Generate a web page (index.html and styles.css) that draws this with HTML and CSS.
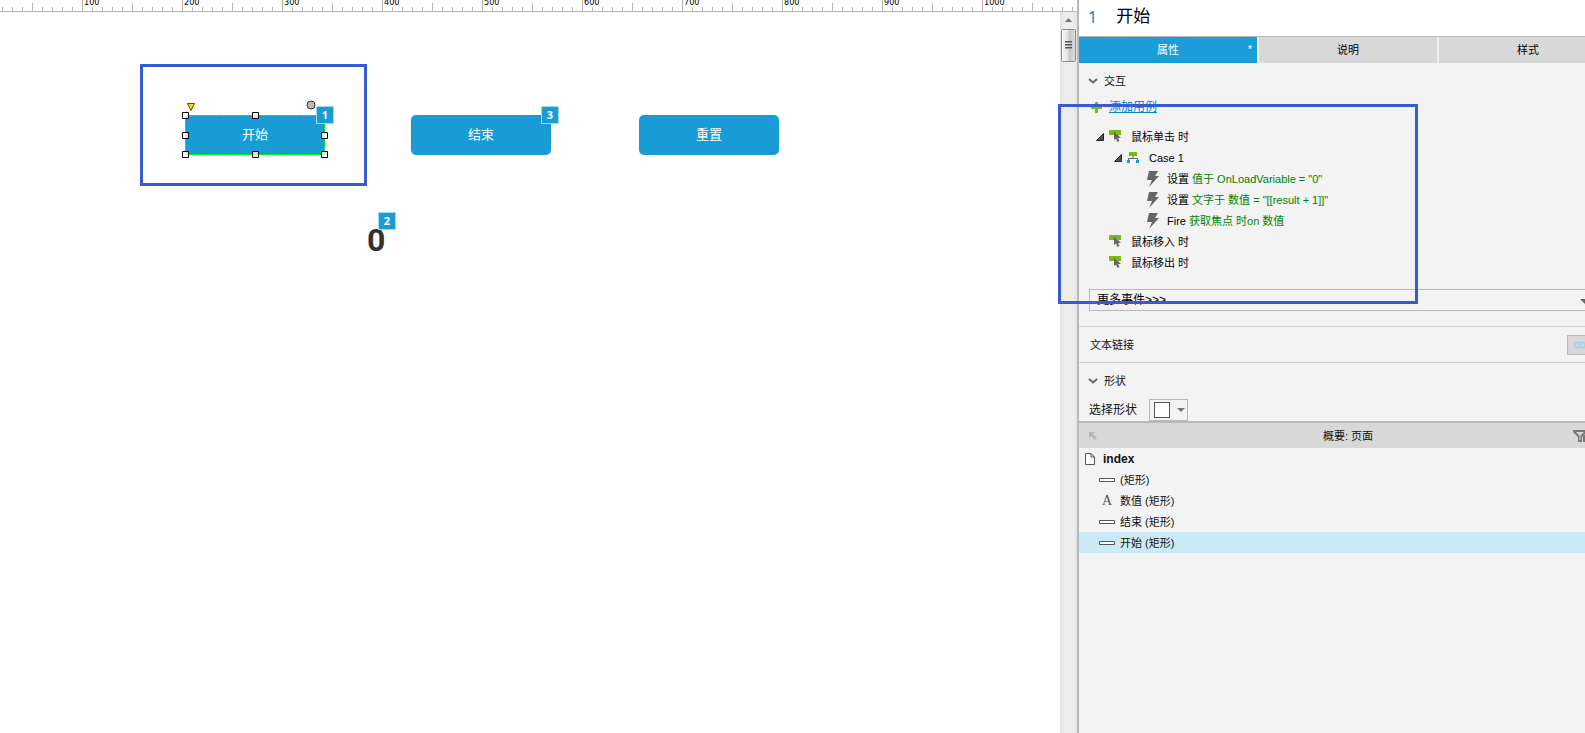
FILE: index.html
```html
<!DOCTYPE html>
<html lang="zh-CN">
<head>
<meta charset="utf-8">
<title>index</title>
<link rel="stylesheet" href="styles.css">
</head>
<body>
<svg class="defs" width="0" height="0" aria-hidden="true">
  <symbol id="open" viewBox="0 0 8 8"><path d="M7.500 .5V7.500H.5Z" fill="#555" stroke="#222"/></symbol>
  <symbol id="mouse" viewBox="0 0 12 14"><path d="M0 0H12V5H9L5 1V5H0Z" fill="#76bc0c"/><path d="M5 1V10L7 8.500L8.500 12L10.500 11L9 8H12Z" fill="#666"/></symbol>
  <symbol id="case" viewBox="0 0 12 12"><path d="M2 0H10V4H2Z" fill="#76bc0c"/><path d="M6 4V6M1.500 8V6.500H10.500V8" fill="none" stroke="#666"/><path d="M0 8H3V11H0ZM9 8H12V11H9Z" fill="#1a9cd8"/></symbol>
  <symbol id="bolt" viewBox="0 0 12 16"><path d="M2 0H11L8 5H12L2 16L5 9H0Z" fill="#666"/></symbol>
  <symbol id="chevron" viewBox="0 0 10 6"><path d="M1 1L5 4.500L9 1" fill="none" stroke="#666673" stroke-width="2"/></symbol>
  <symbol id="bar" viewBox="0 0 16 4"><path d="M.5 .5H15.500V3.500H.5Z" fill="#fff" stroke="#555"/></symbol>
</svg>
<main class="canvas">
  <div class="ruler"><span>100</span><span>200</span><span>300</span><span>400</span><span>500</span><span>600</span><span>700</span><span>800</span><span>900</span><span>1000</span></div>
  <div class="stage">
    <div class="page">
      <div class="frame frame-start"></div>
      <button class="shape shape-start">开始</button>
      <svg class="selection" width="155" height="60" viewBox="0 0 155 60" aria-hidden="true">
        <path d="M4.500 16.500H143.500V55.500H4.500Z" fill="none" stroke="#0f0" stroke-dasharray="4 1"/>
        <path d="M6.500 4.500H13.500L10 11.500Z" fill="#ffd400" stroke="#5b4a10"/>
        <circle cx="130" cy="6" r="4" fill="#bbb" stroke="#333"/>
        <g fill="#fff" fill-opacity=".8" stroke="#000"><path d="M1.500 13.500h6v6h-6zM71.500 13.500h6v6h-6zM1.500 33.500h6v6h-6zM140.500 33.500h6v6h-6zM1.500 52.500h6v6h-6zM71.500 52.500h6v6h-6zM140.500 52.500h6v6h-6z"/></g>
      </svg>
      <span class="badge badge-1">1</span>
      <button class="shape shape-end">结束</button><span class="badge badge-3">3</span>
      <button class="shape shape-reset">重置</button>
      <span class="value">0</span><span class="badge badge-2">2</span>
    </div>
    <div class="scroll">
      <svg width="17" height="51" viewBox="0 0 17 51" aria-hidden="true">
        <defs><linearGradient id="thumb"><stop offset="0" stop-color="#fafafa"/><stop offset=".45" stop-color="#e2e2e2"/><stop offset=".55" stop-color="#c5c6c8"/><stop offset="1" stop-color="#dedede"/></linearGradient></defs>
        <path d="M5 10L8.500 6L12 10Z" fill="#777"/>
        <rect x="1.500" y="17.500" width="14" height="32" rx="1" fill="url(#thumb)" stroke="#8c8c8c"/>
        <path d="M5 29.500H12M5 32.500H12M5 35.500H12" stroke="#555"/>
        <path d="M5 30.500H12M5 33.500H12M5 36.500H12" stroke="#999"/>
      </svg>
    </div>
  </div>
</main>
<aside class="panel">
  <div class="panel-inner">
    <header class="title"><span class="number">1</span><span>开始</span></header>
    <nav class="tabs"><button class="tab active">属性<span class="star">*</span></button><button class="tab">说明</button><button class="tab">样式</button></nav>
    <section class="events">
      <h2 class="heading"><svg width="10" height="6"><use href="#chevron"/></svg>交互</h2>
      <div class="add"><svg width="11" height="11" viewBox="0 0 11 11"><path d="M4 0H7V4H11V7H7V11H4V7H0V4H4Z" fill="#76bc21"/></svg><a href="#">添加用例</a></div>
      <ul class="tree">
        <li class="event"><svg width="8" height="8"><use href="#open"/></svg><svg width="12" height="14"><use href="#mouse"/></svg><span>鼠标单击 时</span></li>
        <li class="event case"><svg width="8" height="8"><use href="#open"/></svg><svg width="12" height="12"><use href="#case"/></svg><span>Case 1</span></li>
        <li class="event action"><svg width="12" height="16"><use href="#bolt"/></svg><span>设置 <em>值于 OnLoadVariable = "0"</em></span></li>
        <li class="event action"><svg width="12" height="16"><use href="#bolt"/></svg><span>设置 <em>文字于 数值 = "[[result + 1]]"</em></span></li>
        <li class="event action"><svg width="12" height="16"><use href="#bolt"/></svg><span>Fire <em>获取焦点 时on 数值</em></span></li>
        <li class="event closed"><svg width="12" height="14"><use href="#mouse"/></svg><span>鼠标移入 时</span></li>
        <li class="event closed"><svg width="12" height="14"><use href="#mouse"/></svg><span>鼠标移出 时</span></li>
      </ul>
      <div class="more"><select aria-label="更多事件"><option>更多事件&gt;&gt;&gt;</option></select><svg width="10" height="5" viewBox="0 0 10 5"><path d="M0 0H10L5 5Z" fill="#666"/></svg></div>
    </section>
    <section class="link-row"><span>文本链接</span><button class="link-button" aria-label="文本链接"><svg width="22" height="8" viewBox="0 0 22 8"><path d="M3 1.500H6Q8 4 6 6.500H3Q0 4 3 1.500ZM8 1.500H11Q13 4 11 6.500H8Q5 4 8 1.500ZM14 1.500H18Q20 4 18 6.500H14Q12 4 14 1.500Z" fill="none" stroke="#a9d3e3" stroke-width="2"/></svg></button></section>
    <section class="shape-section">
      <h2 class="heading"><svg width="10" height="6"><use href="#chevron"/></svg>形状</h2>
      <div class="picker"><span id="pick">选择形状</span><button class="picker-button" aria-labelledby="pick"><span class="swatch"></span><svg width="8" height="4" viewBox="0 0 8 4"><path d="M0 0H8L4 4Z" fill="#777"/></svg></button></div>
    </section>
    <header class="outline-title">
      <svg width="8" height="8" viewBox="0 0 8 8"><path d="M0 0H6L4 2L8 6L6 8L2 4L0 6Z" fill="#b5b5b5"/></svg>
      <span>概要: 页面</span>
      <svg width="34" height="12" viewBox="0 0 34 12"><path d="M0 0H14V2L9 7V12H5V7L0 2ZM3 2L6.500 5.500V10H7.500V5.500L11 2Z" fill="#777" fill-rule="evenodd"/><path d="M10 12V6L13 4V12Z" fill="#777"/></svg>
    </header>
    <ul class="outline">
      <li class="root"><svg width="10" height="12" viewBox="0 0 10 12"><path d="M.5 .5H6L9.500 4V11.500H.5ZM6 .5V4H9.500" fill="#fff" stroke="#555"/></svg><b>index</b></li>
      <li><svg width="16" height="4"><use href="#bar"/></svg>(矩形)</li>
      <li><span class="letter">A</span>数值 (矩形)</li>
      <li><svg width="16" height="4"><use href="#bar"/></svg>结束 (矩形)</li>
      <li class="selected"><svg width="16" height="4"><use href="#bar"/></svg>开始 (矩形)</li>
    </ul>
  </div>
  <div class="frame frame-events"></div>
</aside>
</body>
</html>
```

FILE: styles.css
```css
* { box-sizing: border-box; }
body {
  margin: 0;
  height: 100vh;
  display: flex;
  overflow: hidden;
  background: #fff;
  color: #111;
  font: 11px/20px "Liberation Sans", "Noto Sans CJK SC", sans-serif;
}
button, select { font: inherit; color: inherit; padding: 0; margin: 0; }
ul { list-style: none; margin: 0; padding: 0; }
svg { flex: none; display: block; }
.defs { position: absolute; }

.canvas { flex: 1; min-width: 0; display: flex; flex-direction: column; }
.ruler {
  display: flex;
  height: 12px;
  padding-left: 82px;
  overflow: hidden;
  border-bottom: 1px solid #b4b4b4;
  background:
    linear-gradient(90deg, #b4b4b4 1px, transparent 1px) 32px 3px / 50px 8px repeat-x,
    linear-gradient(90deg, #b4b4b4 1px, transparent 1px) 2px 7px / 10px 4px repeat-x;
}
.ruler span {
  flex: 0 0 100px;
  height: 12px;
  border-left: 1px solid #b4b4b4;
  padding-left: 1px;
  color: #000;
  font: 9px/5px "DejaVu Sans Condensed", "DejaVu Sans", sans-serif;
}
.stage { flex: 1; display: flex; }
.page { flex: 1; position: relative; }
.scroll { width: 17px; background: linear-gradient(90deg, #e4e4e4, #ededed 4px, #ededed 13px, #e4e4e4); }

.frame { position: absolute; border: 3px solid #385ad2; pointer-events: none; }
.frame-start { left: 140px; top: 52px; width: 227px; height: 122px; }
.frame-events { left: -21px; top: 104px; width: 360px; height: 200px; }
.shape {
  position: absolute;
  top: 103px;
  width: 140px;
  height: 40px;
  border: 0;
  border-radius: 5px;
  background: #199bd6;
  color: #fff;
  font-size: 13px;
}
.shape-start { left: 185px; border-radius: 0; }
.shape-end { left: 411px; }
.shape-reset { left: 639px; }
.selection { position: absolute; left: 181px; top: 87px; }
.badge {
  position: absolute;
  width: 18px;
  height: 18px;
  border: 1px solid #a5dcf2;
  background: #199bd6;
  color: #fff;
  font: bold 11px/16px "Noto Sans", sans-serif;
  text-align: center;
}
.badge-1 { left: 316px; top: 94px; }
.badge-2 { left: 378px; top: 200px; }
.badge-3 { left: 541px; top: 94px; }
.value { position: absolute; left: 367px; top: 212px; color: #333; font: 700 32px/32px Roboto, sans-serif; }

.panel { position: relative; flex: none; width: 508px; border-left: 2px solid #b8b8b8; background: #f3f3f3; }
.panel-inner { height: 100%; overflow: hidden; }
.panel-inner > * { width: calc(100% + 32px); }
.title { display: flex; align-items: center; gap: 19px; height: 37px; padding: 0 0 2px 9px; background: #fff; border-bottom: 1px solid #b8b8b8; color: #000; font-size: 17px; }
.number { color: #0a86b8; font: 16px/20px "Noto Sans", sans-serif; }
.tabs { display: grid; grid-template-columns: repeat(3, 1fr); gap: 2px; height: 26px; background: #eee; }
.tab { position: relative; border: 0; background: #d8d8d8; color: #000; }
.tab.active { background: #1b9dd9; color: #fff; }
.star { position: absolute; right: 5px; top: 2px; }

.events { padding: 8px 0 15px; border-bottom: 1px solid #d0d0d0; }
.heading { display: flex; align-items: center; gap: 6px; margin: 0; padding-left: 9px; height: 20px; font-size: 11px; font-weight: normal; }
.add { display: flex; align-items: center; gap: 7px; height: 32px; padding-left: 12px; font-size: 12px; }
.add a { color: #0a86b8; line-height: 12px; }
.tree { padding: 3px 0 16px; }
.event { display: flex; align-items: center; height: 21px; gap: 5px; padding-left: 17px; }
.event span { padding-left: 5px; white-space: nowrap; color: #000; }
.case { padding-left: 35px; }
.action { padding-left: 68px; }
.action span { padding-left: 3px; }
.closed { padding-left: 30px; }
.event em { font-style: normal; color: #008000; }
.more { position: relative; margin: 0 10px; }
.more select { display: block; width: 100%; height: 22px; padding: 0 7px; border: 1px solid #b8b8b8; border-radius: 0; background: transparent; appearance: none; font-size: 12px; color: #000; }
.more svg { position: absolute; right: 17px; top: 10px; }
.link-row { display: flex; align-items: center; justify-content: space-between; height: 36px; padding: 0 16px 0 11px; border-bottom: 1px solid #d0d0d0; }
.link-button { display: flex; align-items: center; width: 34px; height: 20px; padding-left: 5px; border: 1px solid #b8b8b8; background: #d8d8d8; }
.shape-section { padding-top: 8px; border-bottom: 2px solid #b8b8b8; }
.picker { display: flex; align-items: center; gap: 12px; height: 30px; padding: 7px 0 0 10px; font-size: 12px; }
.picker-button { display: flex; align-items: center; justify-content: space-between; width: 39px; height: 22px; padding: 0 2px 0 4px; border: 1px solid #b8b8b8; background: #f3f3f3; }
.swatch { width: 16px; height: 16px; border: 1px solid #555; background: #fff; }
.outline-title { display: grid; grid-template-columns: 34px 1fr 34px; align-items: center; height: 25px; padding: 0 10px; background: #d8d8d8; text-align: center; }
.outline li { display: flex; align-items: center; gap: 5px; height: 21px; padding-left: 20px; }
.outline .root { gap: 8px; padding-left: 6px; font-size: 12px; }
.outline .selected { background: #caeaf7; }
.letter { width: 16px; text-align: center; color: #555; font: 14px/20px "Liberation Serif", serif; }
```
